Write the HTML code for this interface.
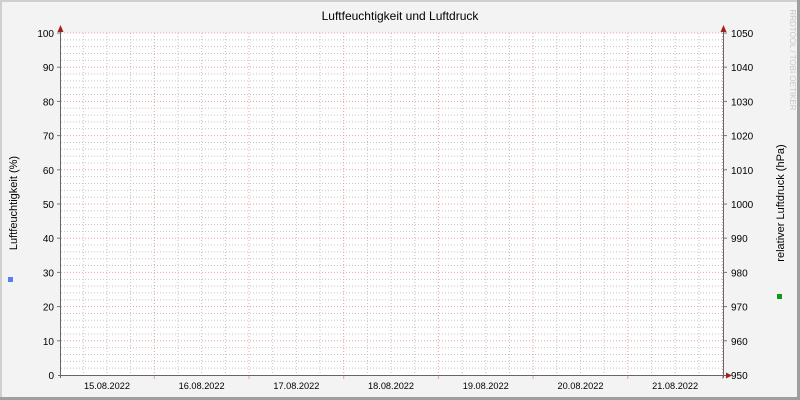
<!DOCTYPE html>
<html><head><meta charset="utf-8"><style>
html,body{margin:0;padding:0;background:#f3f3f3;}
svg{display:block;font-family:"Liberation Sans","DejaVu Sans",sans-serif;}
</style></head><body>
<svg id="g" width="800" height="400" xmlns="http://www.w3.org/2000/svg">
<rect x="0" y="0" width="800" height="400" fill="#f3f3f3"/>
<rect x="0" y="0" width="800" height="2" fill="#cfcfcf"/>
<rect x="0" y="0" width="2" height="400" fill="#cfcfcf"/>
<rect x="0" y="397" width="800" height="3" fill="#9e9e9e"/>
<rect x="797" y="0" width="3" height="400" fill="#9e9e9e"/>
<rect x="61" y="33" width="662" height="342" fill="#ffffff"/>
<g id="grid"></g>
<text x="400" y="20" font-size="12" text-anchor="middle" fill="#000">Luftfeuchtigkeit und Luftdruck</text>
<text transform="translate(17,203) rotate(-90)" font-size="11" text-anchor="middle">Luftfeuchtigkeit (%)</text>
<text transform="translate(784,203) rotate(-90)" font-size="11" text-anchor="middle">relativer Luftdruck (hPa)</text>
<text transform="translate(790,60) rotate(90)" font-size="8" text-anchor="middle" fill="#c8c8c8">RRDTOOL / TOBI OETIKER</text>
<rect x="8" y="277" width="5" height="5" fill="#5a7ef0"/>
<rect x="777" y="294" width="5" height="5" fill="#119911"/>
</svg>
<script>
var g=document.getElementById('grid'),s='';
var L=61,R=723,T=33,B=375,d=(B-T)/100;
for(var k=1;k<50;k++){var y=B-k*2*d;if(k%5==0)continue;s+='<line x1="'+L+'" x2="'+R+'" y1="'+y+'" y2="'+y+'" stroke="#c4c4c4" stroke-dasharray="1,2"/>';}
var dx=94.7/4;
for(var i=0;i<28;i++){var x=83.3+i*dx;if(x>R)break;if(Math.abs((x-154.3)/94.7-Math.round((x-154.3)/94.7))<0.01)continue;s+='<line x1="'+x+'" x2="'+x+'" y1="'+T+'" y2="'+B+'" stroke="#c4c4c4" stroke-dasharray="1,2"/>';}
for(var k=1;k<=10;k++){var y=B-k*10*d;s+='<line x1="'+L+'" x2="'+R+'" y1="'+y+'" y2="'+y+'" stroke="#e8a0a0" stroke-dasharray="1,2"/>';
s+='<text x="54" y="'+(y+4)+'" font-size="10" text-anchor="end">'+(k*10)+'</text>';
s+='<text x="731" y="'+(y+4)+'" font-size="10">'+(950+k*10)+'</text>';
s+='<line x1="57" x2="61" y1="'+y+'" y2="'+y+'" stroke="#777"/>';
s+='<line x1="723" x2="727" y1="'+y+'" y2="'+y+'" stroke="#777"/>';}
s+='<text x="54" y="379" font-size="10" text-anchor="end">0</text><text x="731" y="379" font-size="10">950</text>';
var days=['15','16','17','18','19','20','21'];
for(var j=0;j<7;j++){var x=154.3+j*94.7;s+='<line x1="'+x+'" x2="'+x+'" y1="'+T+'" y2="'+B+'" stroke="#e8a0a0" stroke-dasharray="1,2"/>';
s+='<line x1="'+x+'" x2="'+x+'" y1="'+B+'" y2="'+(B+4)+'" stroke="#e8a0a0"/>';
s+='<text x="'+(x-47.35)+'" y="389" font-size="9.2" text-anchor="middle">'+days[j]+'.08.2022</text>';}
s+='<line x1="60.5" x2="60.5" y1="30" y2="378" stroke="#666"/>';
s+='<line x1="723.5" x2="723.5" y1="30" y2="378" stroke="#666"/>';
s+='<line x1="58" x2="726" y1="375.5" y2="375.5" stroke="#666"/>';
s+='<polygon points="57.5,32 63.5,32 60.5,25" fill="#a02020"/>';
s+='<polygon points="720.5,32 726.5,32 723.5,25" fill="#a02020"/>';
s+='<polygon points="726,372.5 726,378.5 732,375.5" fill="#a02020"/>';
g.innerHTML=s;
</script>
</body></html>
